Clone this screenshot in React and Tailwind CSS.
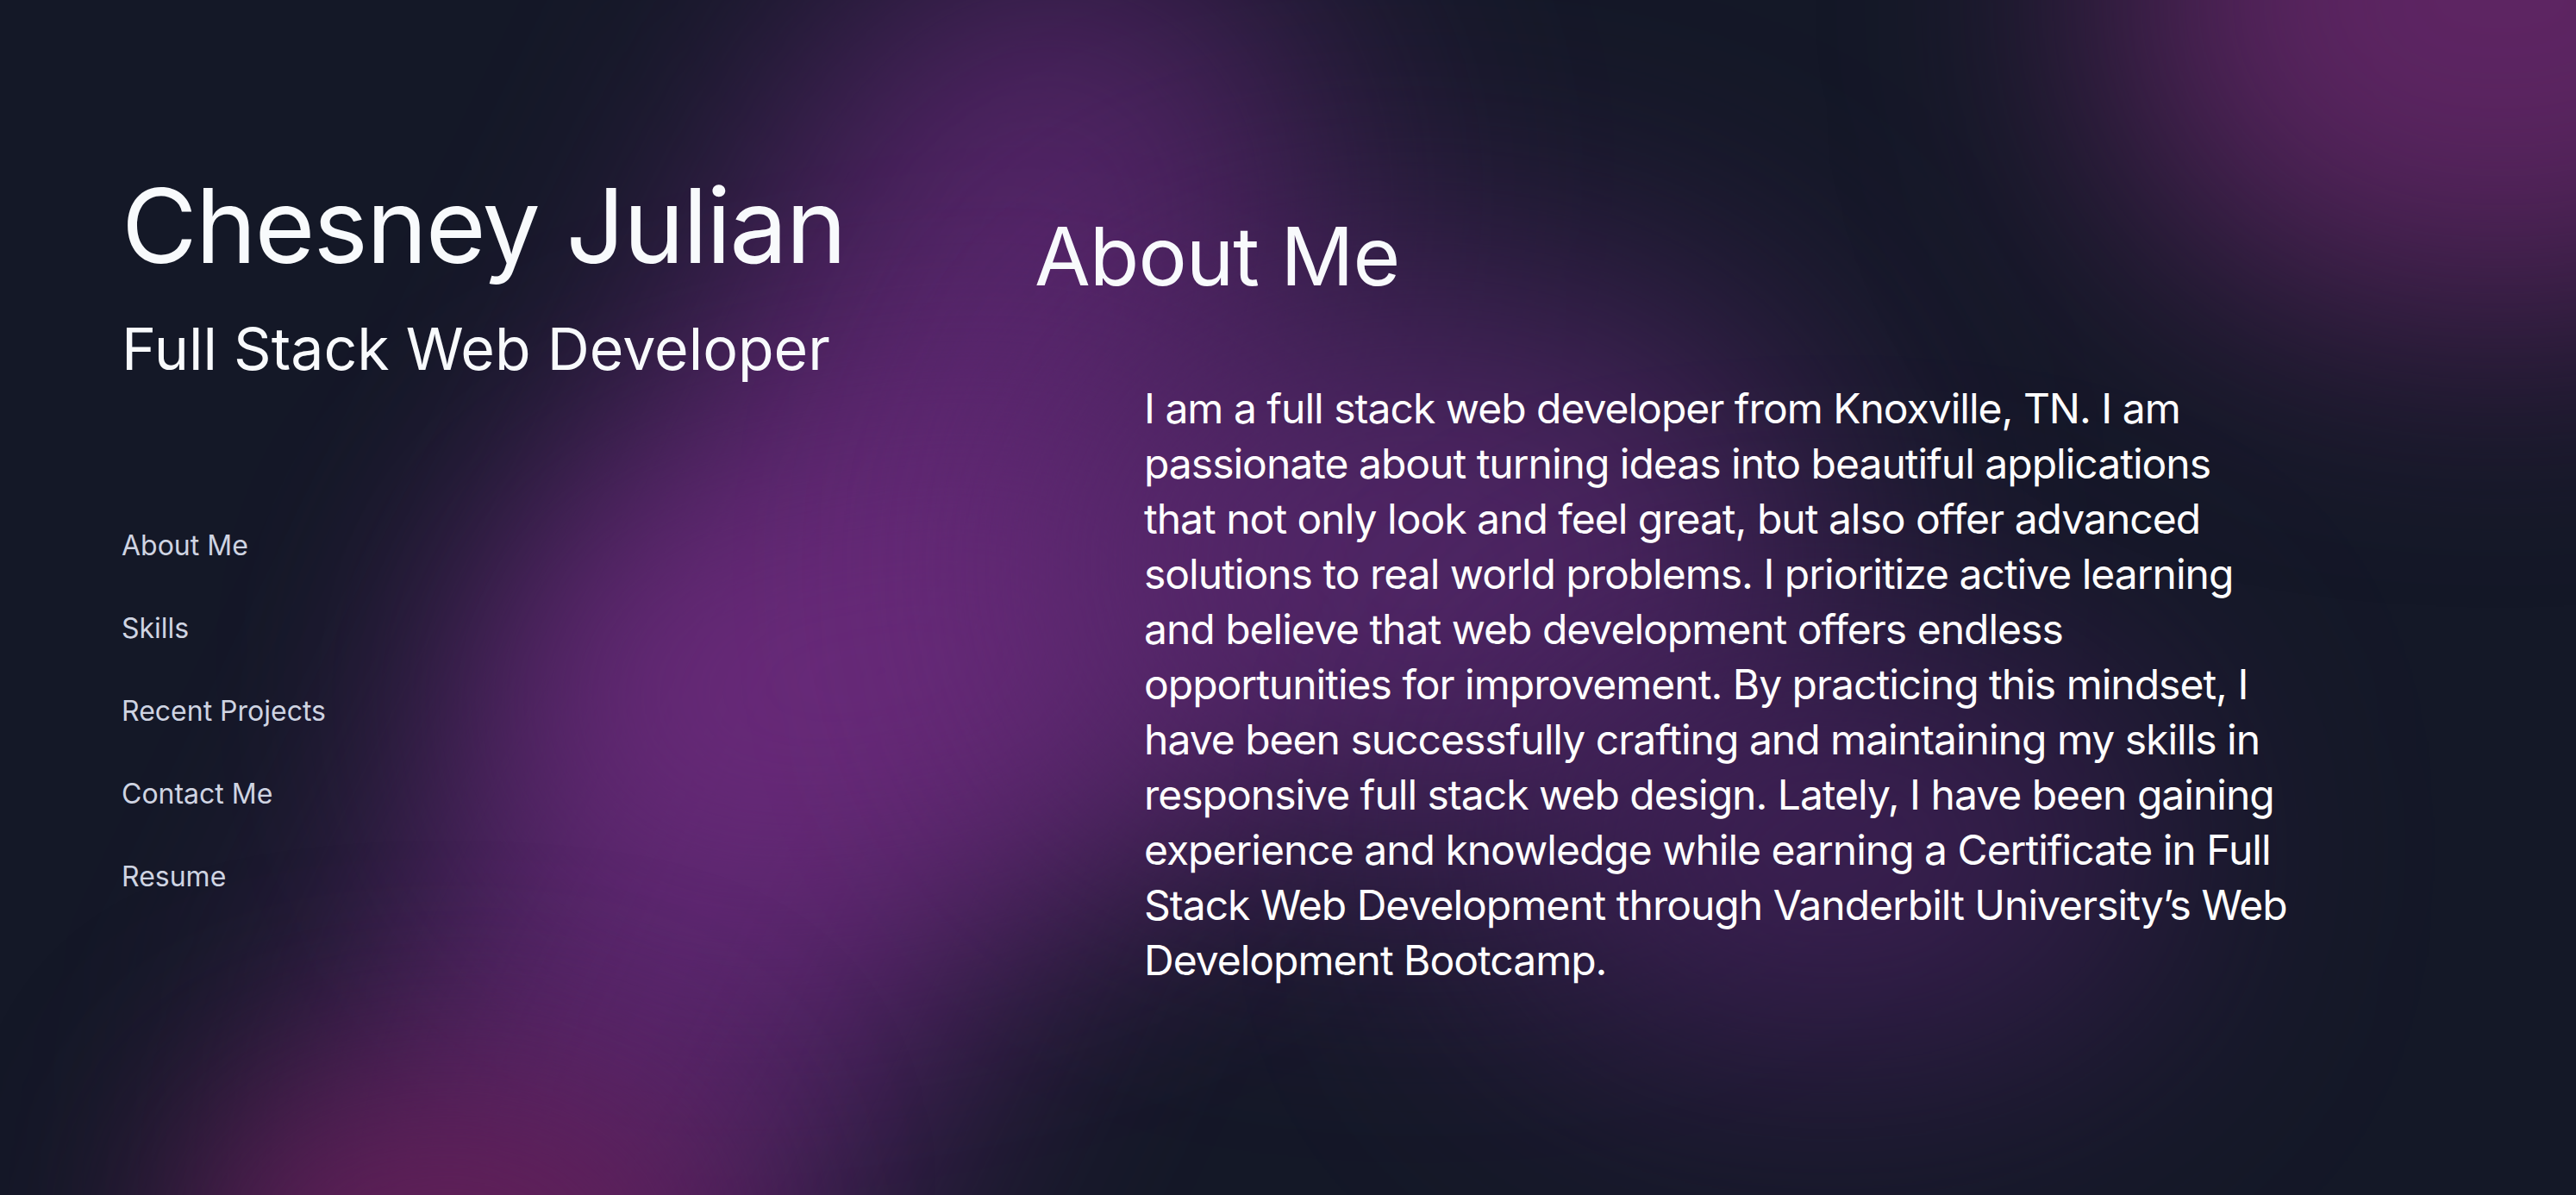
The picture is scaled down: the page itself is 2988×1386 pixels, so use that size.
import React from "react";

const lines = [
  "I am a full stack web developer from Knoxville, TN. I am",
  "passionate about turning ideas into beautiful applications",
  "that not only look and feel great, but also offer advanced",
  "solutions to real world problems. I prioritize active learning",
  "and believe that web development offers endless",
  "opportunities for improvement. By practicing this mindset, I",
  "have been successfully crafting and maintaining my skills in",
  "responsive full stack web design. Lately, I have been gaining",
  "experience and knowledge while earning a Certificate in Full",
  "Stack Web Development through Vanderbilt University\u2019s Web",
  "Development Bootcamp.",
];

const nav = ["About Me", "Skills", "Recent Projects", "Contact Me", "Resume"];

export default function App() {
  return (
    <div className="relative w-full h-[1386px] overflow-hidden bg-[#141827] font-['Inter',_'Liberation_Sans',_sans-serif]">
      {/* decorative background glow */}
      <div className="absolute inset-0 pointer-events-none">
        <div className="absolute left-[640px] top-[-150px] w-[600px] h-[1900px] rotate-[26deg] rounded-full bg-[#652879] blur-[160px] opacity-80" />
        <div className="absolute left-[560px] top-[520px] w-[900px] h-[520px] -rotate-[10deg] rounded-full bg-[#6e2b7e] blur-[150px] opacity-80" />
        <div className="absolute left-[1200px] top-[330px] w-[900px] h-[650px] rounded-full bg-[#5a2870] blur-[170px] opacity-85" />
        <div className="absolute left-[2450px] top-[-350px] w-[900px] h-[700px] rounded-full bg-[#5e2563] blur-[150px]" />
        <div className="absolute left-[220px] top-[1260px] w-[600px] h-[380px] rounded-full bg-[#611f57] blur-[120px]" />
        <div className="absolute left-[1750px] top-[760px] w-[750px] h-[450px] rounded-full bg-[#4a2262] blur-[160px] opacity-75" />
      </div>

      <div className="relative flex">
        <div className="w-[1200px] shrink-0 pl-[141px] pt-[202px]">
          <h1 className="text-[120px] leading-none text-[#f8fafc] tracking-[-2px]">Chesney Julian</h1>
          <h2 className="mt-[48px] text-[68px] leading-none text-[#f8fafc]">Full Stack Web Developer</h2>
          <nav className="mt-[179px] flex flex-col gap-[64px]">
            {nav.map((n) => (
              <a key={n} className="text-[32px] leading-[32px] text-[#cfd4e2]">{n}</a>
            ))}
          </nav>
        </div>
        <div className="pt-[250px]">
          <h2 className="text-[94px] leading-none text-[#f8fafc] tracking-[-1px]">About Me</h2>
          <p className="mt-[98px] ml-[127px] text-[48px] leading-[64px] text-white tracking-[-1px]">
            {lines.map((l, i) => (
              <span key={i} className="block whitespace-nowrap">{l}</span>
            ))}
          </p>
        </div>
      </div>
    </div>
  );
}
